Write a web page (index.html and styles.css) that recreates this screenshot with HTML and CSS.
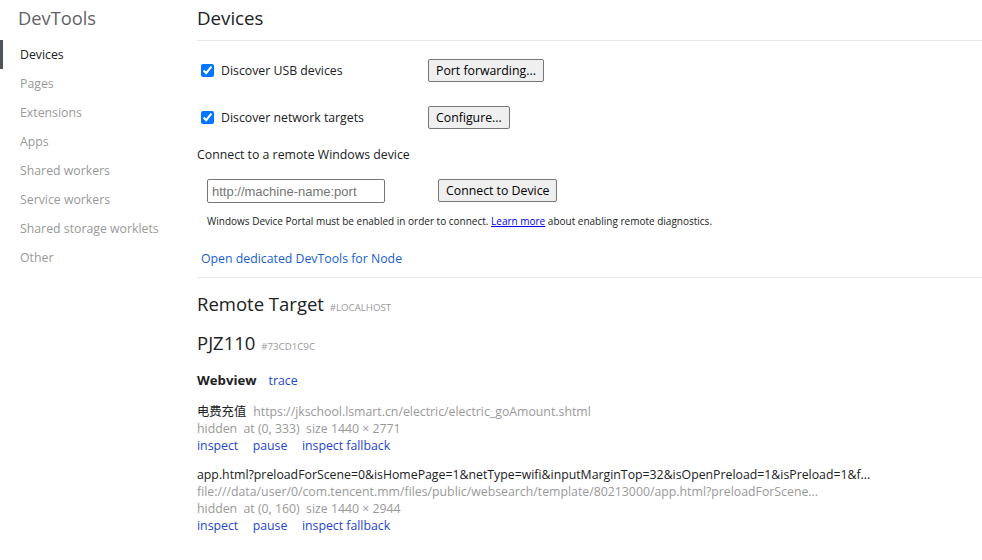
FILE: index.html
```html
<!DOCTYPE html>
<html>
<head>
<meta charset="utf-8">
<link rel="stylesheet" href="styles.css">
</head>
<body>
<div class="app">
  <nav class="sidebar">
    <div class="brand">DevTools</div>
    <ul class="nav">
      <li class="nav-item active">Devices</li>
      <li class="nav-item">Pages</li>
      <li class="nav-item">Extensions</li>
      <li class="nav-item">Apps</li>
      <li class="nav-item">Shared workers</li>
      <li class="nav-item">Service workers</li>
      <li class="nav-item">Shared storage worklets</li>
      <li class="nav-item">Other</li>
    </ul>
  </nav>
  <main class="main">
    <h1 class="page-title">Devices</h1>
    <div class="opt-row first">
      <label class="opt-label"><input type="checkbox" class="cb" checked><span>Discover USB devices</span></label>
      <button class="btn">Port forwarding...</button>
    </div>
    <div class="opt-row second">
      <label class="opt-label"><input type="checkbox" class="cb" checked><span>Discover network targets</span></label>
      <button class="btn">Configure...</button>
    </div>
    <div class="remote-title">Connect to a remote Windows device</div>
    <div class="remote-row">
      <input class="addr" type="text" placeholder="http://machine-name:port">
      <button class="btn">Connect to Device</button>
    </div>
    <div class="hint">Windows Device Portal must be enabled in order to connect. <a href="#" class="hint-link">Learn more</a> about enabling remote diagnostics.</div>
    <div class="node-link-row"><a href="#" class="node-link">Open dedicated DevTools for Node</a></div>
    <div class="section">
      <div class="section-title">Remote Target <span class="tag">#LOCALHOST</span></div>
      <div class="device-title">PJZ110 <span class="tag">#73CD1C9C</span></div>
      <div class="browser-row"><span class="browser-name">Webview</span><a href="#" class="link trace">trace</a></div>
      <div class="target">
        <div class="target-line"><span class="target-name">电费充值</span><span class="target-url">https://jkschool.lsmart.cn/electric/electric_goAmount.shtml</span></div>
        <div class="target-line muted">hidden&nbsp; at (0, 333)&nbsp; size 1440 × 2771</div>
        <div class="target-actions"><a href="#" class="link">inspect</a><a href="#" class="link">pause</a><a href="#" class="link">inspect fallback</a></div>
      </div>
      <div class="target">
        <div class="target-line"><span class="target-name">app.html?preloadForScene=0&amp;isHomePage=1&amp;netType=wifi&amp;inputMarginTop=32&amp;isOpenPreload=1&amp;isPreload=1&amp;f...</span></div>
        <div class="target-line muted">file:///data/user/0/com.tencent.mm/files/public/websearch/template/80213000/app.html?preloadForScene...</div>
        <div class="target-line muted">hidden&nbsp; at (0, 160)&nbsp; size 1440 × 2944</div>
        <div class="target-actions"><a href="#" class="link">inspect</a><a href="#" class="link">pause</a><a href="#" class="link">inspect fallback</a></div>
      </div>
    </div>
  </main>
</div>
</body>
</html>
```
FILE: styles.css
```css
* { box-sizing: border-box; }
html, body { margin: 0; padding: 0; background: #fff; }
body {
  font-family: "Open Sans", "Noto Sans", "Noto Sans CJK SC", sans-serif;
  font-size: 12.3px;
  color: #202124;
  width: 982px;
  height: 560px;
  overflow: hidden;
}
.app { display: flex; }
.sidebar { width: 197px; flex: none; }
.brand {
  font-size: 18.3px;
  line-height: 24px;
  padding: 6px 0 0 18px;
  height: 40px;
  color: #5f6368;
}
.nav { list-style: none; margin: 0; padding: 0; }
.nav-item {
  height: 29px;
  line-height: 28px;
  padding-top: 1px;
  padding-left: 17px;
  color: #999;
  border-left: 3px solid transparent;
}
.nav-item.active { color: #202124; border-left-color: #4e555d; }

.main { flex: 1; min-width: 0; }
.page-title {
  margin: 0;
  font-weight: normal;
  font-size: 18.7px;
  line-height: 24px;
  height: 41px;
  padding-top: 6px;
  border-bottom: 1px solid #e8e8e8;
  color: #202124;
}
.opt-row { display: flex; align-items: center; height: 23px; }
.opt-row.first { margin-top: 18px; }
.opt-row.second { margin-top: 24px; }
.opt-label { width: 231px; display: flex; align-items: center; }
.cb { width: 13px; height: 13px; margin: 0 7px 0 4px; }
.btn {
  font-family: "Open Sans", "Noto Sans", sans-serif;
  font-size: 12.3px;
  height: 23px;
  line-height: 19px;
  padding: 0 7px;
  background: #efefef;
  border: 1px solid #767676;
  border-radius: 2px;
  color: #000;
}
.remote-title { margin-top: 17px; line-height: 17px; }
.remote-row { display: flex; align-items: flex-start; margin-top: 16px; }
.addr {
  width: 178px;
  height: 24px;
  margin-left: 10px;
  margin-right: 53px;
  border: 1px solid #767676;
  border-radius: 2px;
  padding: 0 4px;
  font-family: "Liberation Sans", Arial, sans-serif;
  font-size: 13px;
}
.addr::placeholder { color: #757575; }
.hint {
  margin-top: 11px;
  margin-left: 10px;
  font-size: 10px;
  line-height: 14px;
  color: #202124;
}
.hint-link { color: #0000ee; text-decoration: underline; }
.node-link-row { margin-top: 22px; line-height: 17px; padding-left: 4px; height: 27px; }
.node-link { color: #1a5fcc; text-decoration: none; }
.section { border-top: 1px solid #e8e8e8; padding-top: 14px; }
.section-title, .device-title {
  font-size: 18.5px;
  line-height: 24px;
  color: #202124;
}
.device-title { margin-top: 11px; }
.tag { font-size: 9.7px; color: #999; text-transform: uppercase; margin-left: 1px; }
.browser-row { margin-top: 13px; line-height: 17px; display: flex; gap: 12px; }
.browser-name { font-weight: bold; font-size: 13.2px; }
.link { color: #2347d0; text-decoration: none; }
.target { line-height: 17px; margin-top: 14px; }
.target + .target { margin-top: 12px; }
.target-name { color: #202124; }
.target-url { color: #999; margin-left: 7px; }
.muted { color: #999; }
.target-actions { display: flex; gap: 14.5px; }
```
